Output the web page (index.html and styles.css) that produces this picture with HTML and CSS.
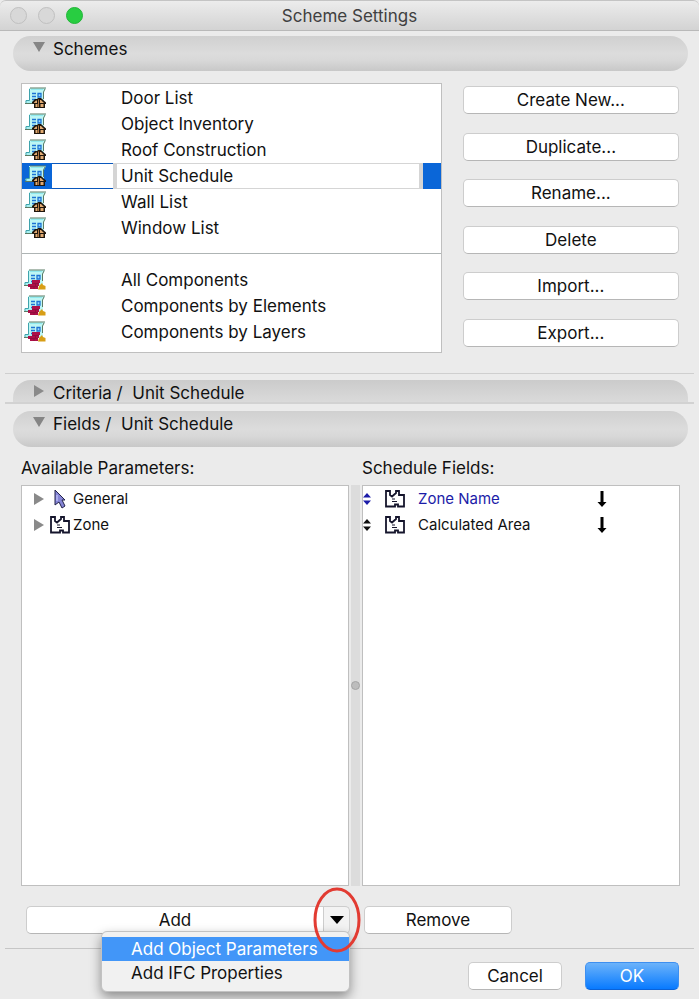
FILE: index.html
```html
<!DOCTYPE html>
<html lang="en">
<head>
<meta charset="utf-8">
<title>Scheme Settings</title>
<link rel="stylesheet" href="styles.css">
</head>
<body>
<svg class="defs" aria-hidden="true">
  <symbol id="scroll" viewBox="0 0 22 22">
    <path d="M4 1H21L19 5V17H2L0 14H4Z" fill="#bdf6f4"/>
    <path d="M5 1H21M20 2L18.500 5V12M0 16.500H12" fill="none" stroke="#5b7a64"/>
    <path d="M4.500 2V13.500H1V16" fill="none" stroke="#3fa3ac"/>
    <path d="M6 2.500H18M2 15H9" stroke="#8eeaee"/>
    <path d="M7 6.500H11M7 9.500H11M7 12.500H11" stroke="#1d74d4" stroke-width="1.4"/>
    <path d="M13 6.500H16V10H13Z" fill="#9ad6fb" stroke="#1d74d4" stroke-width="1.3"/>
  </symbol>
  <symbol id="element-scheme" viewBox="0 0 22 22">
    <use href="#scroll"/>
    <path d="M7 16.500V15L10 12H12L13 11H16L21 15.500V17H20V21H9V17Z" fill="#1f160d"/>
    <path d="M9 15.500L11 13.500H12V16H9ZM15 13H16L19 16H15ZM10.500 17H12.500V20H10.500ZM15.500 17H18.500V20H15.500Z" fill="#e2ab72"/>
    <path d="M13.500 12.500V20" stroke="#b27843"/>
  </symbol>
  <symbol id="component-scheme" viewBox="0 0 22 22">
    <use href="#scroll"/>
    <path d="M8 11H16V14H15V17H14V20H6V18H4V15H8Z" fill="#ad1048"/>
    <path d="M8 14.500H15M6 17.500H14M11.500 15V17M10 18V20" stroke="#860d3b" stroke-width=".7"/>
    <path d="M14 20.500L15 17L18 14L19 16L21.500 17V20.500Z" fill="#d89e16"/>
  </symbol>
  <symbol id="zone" viewBox="0 0 20 18">
    <path d="M1 1H5V5L7 6.500L11 3V1H14V5H19V16.500H13V14.500H10V16.500H1Z" fill="#fff" stroke="#15152c" stroke-width="1.8"/>
    <path d="M7 9H10M7 11.500H12" stroke="#15152c" stroke-width="1.2"/>
  </symbol>
  <symbol id="pointer" viewBox="0 0 14 20">
    <path d="M2 1L12 11H9L12 17L9 19L6 13L2 16Z" fill="#8585d6" stroke="#23234a"/>
    <path d="M4 6V12" stroke="#b9b9f4" stroke-width="1.5"/>
  </symbol>
  <symbol id="updown" viewBox="0 0 8 12"><path d="M4 0L8 4.500H0ZM4 12L8 7.500H0Z" fill="currentColor"/></symbol>
  <symbol id="down" viewBox="0 0 10 18"><path d="M3.500 1H6.500V12H9.500L5 17L.5 12H3.500Z" fill="#000"/></symbol>
  <symbol id="tri-right" viewBox="0 0 10 12"><path d="M0 0L10 6L0 12Z" fill="#8a8a8a"/></symbol>
  <symbol id="tri-down" viewBox="0 0 12 10"><path d="M0 0H12L6 10Z" fill="#858585"/></symbol>
</svg>

<main class="window">
  <header class="titlebar">
    <div class="lights"><i class="light"></i><i class="light"></i><i class="light light-zoom"></i></div>
    <h1 class="title">Scheme Settings</h1>
  </header>

  <button class="section" type="button" aria-expanded="true"><svg class="tri-down"><use href="#tri-down"/></svg><span>Schemes</span></button>
  <section class="schemes">
    <div class="box scheme-list">
      <ul class="rows">
        <li class="row"><svg class="scheme-icon"><use href="#element-scheme"/></svg><span>Door List</span></li>
        <li class="row"><svg class="scheme-icon"><use href="#element-scheme"/></svg><span>Object Inventory</span></li>
        <li class="row"><svg class="scheme-icon"><use href="#element-scheme"/></svg><span>Roof Construction</span></li>
        <li class="row row-selected"><span class="icon-cell"><svg class="scheme-icon"><use href="#element-scheme"/></svg></span><span class="edit-cell"><input class="name-input" type="text" value="Unit Schedule" aria-label="Scheme name"></span></li>
        <li class="row"><svg class="scheme-icon"><use href="#element-scheme"/></svg><span>Wall List</span></li>
        <li class="row"><svg class="scheme-icon"><use href="#element-scheme"/></svg><span>Window List</span></li>
      </ul>
      <hr class="list-rule">
      <ul class="rows rows-components">
        <li class="row"><svg class="scheme-icon"><use href="#component-scheme"/></svg><span>All Components</span></li>
        <li class="row"><svg class="scheme-icon"><use href="#component-scheme"/></svg><span>Components by Elements</span></li>
        <li class="row"><svg class="scheme-icon"><use href="#component-scheme"/></svg><span>Components by Layers</span></li>
      </ul>
    </div>
    <div class="actions">
      <button class="btn" type="button">Create New...</button>
      <button class="btn" type="button">Duplicate...</button>
      <button class="btn" type="button">Rename...</button>
      <button class="btn" type="button">Delete</button>
      <button class="btn" type="button">Import...</button>
      <button class="btn" type="button">Export...</button>
    </div>
  </section>

  <div class="collapsed">
    <button class="section section-closed" type="button" aria-expanded="false"><svg class="tri-right"><use href="#tri-right"/></svg><span>Criteria /  Unit Schedule</span></button>
  </div>
  <button class="section section-fields" type="button" aria-expanded="true"><svg class="tri-down"><use href="#tri-down"/></svg><span>Fields /  Unit Schedule</span></button>

  <section class="fields">
    <div class="pane pane-left">
      <h2 class="label">Available Parameters:</h2>
      <ul class="box rows small">
        <li class="tree-row"><svg class="tri-right"><use href="#tri-right"/></svg><span class="tree-icon"><svg class="pointer"><use href="#pointer"/></svg></span><span>General</span></li>
        <li class="tree-row"><svg class="tri-right"><use href="#tri-right"/></svg><span class="tree-icon"><svg class="zone"><use href="#zone"/></svg></span><span>Zone</span></li>
      </ul>
    </div>
    <div class="splitter"><i class="grip"></i></div>
    <div class="pane pane-right">
      <h2 class="label">Schedule Fields:</h2>
      <ul class="box rows small">
        <li class="field-row field-active"><svg class="updown"><use href="#updown"/></svg><svg class="zone"><use href="#zone"/></svg><span class="field-name">Zone Name</span><svg class="down"><use href="#down"/></svg></li>
        <li class="field-row"><svg class="updown"><use href="#updown"/></svg><svg class="zone"><use href="#zone"/></svg><span class="field-name">Calculated Area</span><svg class="down"><use href="#down"/></svg></li>
      </ul>
    </div>
  </section>

  <div class="field-actions">
    <div class="split">
      <button class="btn split-main" type="button">Add</button>
      <button class="btn split-arrow" type="button" aria-label="More add options" aria-expanded="true"><svg class="caret" viewBox="0 0 14 8"><path d="M0 0H14L7 8Z"/></svg></button>
      <div class="menu" role="menu">
        <button class="menu-item menu-item-active" type="button" role="menuitem">Add Object Parameters</button>
        <button class="menu-item" type="button" role="menuitem">Add IFC Properties</button>
      </div>
      <svg class="ring" viewBox="0 0 50 68" aria-hidden="true"><ellipse cx="25" cy="34" rx="22" ry="31"/></svg>
    </div>
    <button class="btn remove" type="button">Remove</button>
  </div>

  <footer class="footer">
    <button class="btn dialog-btn" type="button">Cancel</button>
    <button class="btn dialog-btn primary" type="button">OK</button>
  </footer>
</main>
</body>
</html>
```
FILE: styles.css
```css
* { box-sizing: border-box; }
body {
  margin: 0;
  background: #ebebeb;
  color: #111;
  font: 17px/26px Inter, "Liberation Sans", sans-serif;
}
button, input { font: inherit; color: inherit; margin: 0; }
ul { list-style: none; margin: 0; padding: 0; }
svg { flex: none; display: block; }
.defs { position: absolute; width: 0; height: 0; }

.window { display: flex; flex-direction: column; min-height: 100vh; }

.titlebar {
  display: grid;
  grid-template-columns: 1fr auto 1fr;
  align-items: center;
  height: 31px;
  padding: 0 10px;
  background: linear-gradient(#ececec, #d3d3d3);
  border-top: 1px solid #c4c4c4;
  border-bottom: 1px solid #b9b9b9;
  border-radius: 6px 6px 0 0;
}
.lights { display: flex; gap: 11px; }
.light { width: 17px; height: 17px; border: 1px solid #c0c0c0; border-radius: 50%; background: #d8d8d8; }
.light-zoom { background: #28cd41; border-color: #22b638; }
.title { margin: 0; font-size: 17px; font-weight: 400; color: #404040; }

.section {
  display: flex;
  align-items: flex-start;
  gap: 8px;
  height: 35px;
  margin: 5px 11px 0 13px;
  padding: 0 20px;
  border: 0;
  border-radius: 18px;
  background: linear-gradient(#d0d0d0, #dcdcdc 50%, #d8d8d8 70%, #c8c8c8);
  white-space: pre;
  text-align: left;
}
.tri-down { width: 12px; height: 10px; margin-top: 6px; }
.tri-right { width: 10px; height: 12px; }
.section .tri-right { margin: 5px 1px 0; }
.section-closed { height: 22px; margin-top: 0; border-radius: 18px 18px 0 0; background: linear-gradient(#cbcbcb, #dadada); }
.collapsed {
  display: flex;
  flex-direction: column;
  margin: 20px 5px 0;
  padding-top: 6px;
  border-top: 1px solid #cfcfcf;
  border-bottom: 2px solid #d2d2d2;
}
.collapsed .section { margin: 0 6px 0 8px; }
.section-fields { height: 36px; margin-top: 7px; }

.schemes { display: flex; gap: 21px; margin: 12px 20px 0 21px; }
.box { background: #fff; border: 1px solid #bfbfbf; }
.scheme-list { flex: 420 1 0; padding: 1px 0 7px; }
.row { display: flex; align-items: center; gap: 75px; height: 26px; padding-left: 3px; }
.scheme-icon { width: 22px; height: 22px; }
.rows .row { gap: 74px; }
.rows-components .row { gap: 75px; padding-left: 2px; }
.rows .row-selected { gap: 0; padding: 0; background: #0a66d8; }
.icon-cell { width: 30px; padding-left: 3px; }
.edit-cell {
  display: flex;
  flex: 1;
  height: 26px;
  margin-right: 18px;
  padding-left: 61px;
  background: linear-gradient(#0a58bd, #0a58bd) 0 0 / 61px 1px no-repeat, linear-gradient(#0a58bd, #0a58bd) 0 100% / 61px 1px no-repeat, #fff;
}
.name-input {
  flex: 1;
  min-width: 0;
  padding: 0 4px;
  border: solid #d5d5d5;
  border-width: 1px 4px;
  border-radius: 0;
  background: #fff;
  outline: 0;
}
.list-rule { margin: 12px 0 13px; border: 0; border-top: 1px solid #aeb4b4; }

.actions { display: flex; flex: 217 1 0; flex-direction: column; justify-content: space-between; padding: 3px 0 6px; }
.btn {
  height: 28px;
  padding: 0 8px;
  border: 1px solid #cdcdcd;
  border-bottom-color: #b6b6b6;
  border-radius: 5px;
  background: #fff;
  line-height: 26px;
}

.fields { display: flex; flex: 1; margin: 8px 19px 0 21px; }
.pane { display: flex; flex-direction: column; }
.pane .box { flex: 1; }
.pane-left { flex: 328 1 0; }
.pane-right { flex: 318 1 0; }
.label { margin: 0; height: 30px; font-size: 17px; font-weight: 400; line-height: 26px; }
.splitter { display: grid; place-items: center; width: 9px; margin: 30px 2px 0; background: #dcdcdc; }
.grip { width: 9px; height: 9px; border: 1px solid #a5a5a5; border-radius: 50%; background: #bdbdbd; }
.small { font-size: 15px; }
.tree-row { display: flex; align-items: center; height: 26px; padding-left: 12px; }
.tree-icon { display: flex; justify-content: center; width: 20px; margin: 0 3px 0 6px; }
.pointer { width: 14px; height: 20px; }
.zone { width: 20px; height: 18px; }
.field-row { display: flex; align-items: center; height: 26px; }
.updown { width: 8px; height: 12px; margin-right: 14px; }
.field-name { width: 179px; margin-left: 13px; }
.down { width: 10px; height: 18px; }
.field-active { color: #1c1ca8; }

.field-actions { display: flex; gap: 14px; margin: 20px 19px 14px 26px; }
.split { position: relative; display: flex; width: 50%; max-width: 324px; }
.split-main { flex: 1; border-right: 0; border-radius: 5px 0 0 5px; }
.split-arrow { display: grid; place-items: center; width: 27px; padding: 0; border-radius: 0 5px 5px 0; background: #f3f3f3; }
.caret { width: 14px; height: 8px; }
.remove { width: 148px; }
.menu {
  position: absolute;
  z-index: 1;
  top: 25px;
  right: 0;
  width: 249px;
  padding: 5px 0 6px;
  border: 1px solid #c2c2c2;
  border-radius: 6px;
  background: #f1f1f1;
  box-shadow: 0 5px 12px #0006;
}
.menu-item { display: block; width: 100%; height: 24px; padding: 0 0 0 29px; border: 0; background: none; line-height: 24px; text-align: left; white-space: nowrap; }
.menu-item-active { background: #4296f8; color: #fff; }
.ring { position: absolute; z-index: 2; top: -20px; right: -12px; width: 50px; height: 68px; fill: none; stroke: #e23b32; stroke-width: 3px; pointer-events: none; }

.footer { display: flex; justify-content: flex-end; gap: 23px; margin: 0 5px; padding: 13px 15px 9px; border-top: 1px solid #c6c6c6; }
.dialog-btn { width: 94px; }
.primary { border-color: #3d8ff0; border-bottom-color: #0a62d8; background: linear-gradient(#6cb3fa, #087aff); color: #fff; }
```
